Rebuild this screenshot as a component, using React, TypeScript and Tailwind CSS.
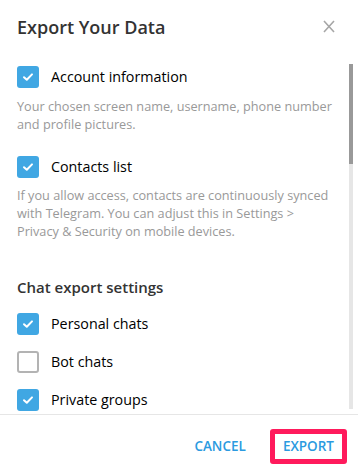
import React from "react";

type Item = { label: string; checked: boolean };

function Check({ checked }: { checked: boolean }) {
  if (!checked) {
    return <div className="w-[22px] h-[22px] shrink-0 rounded-[3px] border-2 border-[#b3b3b3] bg-white" />;
  }
  return (
    <div className="w-[22px] h-[22px] shrink-0 rounded-[3px] bg-[#40a7e3] flex items-center justify-center">
      <svg width="12" height="10" viewBox="0 0 12 10" fill="none">
        <path d="M2 5.2 L4.8 7.8 L10 2.4" stroke="white" strokeWidth="2" strokeLinecap="round" strokeLinejoin="round" />
      </svg>
    </div>
  );
}

function Row({ label, checked }: { label: string; checked: boolean }) {
  return (
    <div className="flex items-center gap-3 h-[22px]">
      <Check checked={checked} />
      <span className="text-[14.3px] text-[#000] leading-[22px]">{label}</span>
    </div>
  );
}

const chats: Item[] = [
  { label: "Personal chats", checked: true },
  { label: "Bot chats", checked: false },
  { label: "Private groups", checked: true },
];

export default function App() {
  return (
    <div
      className="w-[358px] h-[474px] bg-white flex flex-col overflow-hidden"
      style={{ fontFamily: '"Open Sans", "Liberation Sans", sans-serif' }}
    >
      {/* header */}
      <div className="h-[54px] shrink-0 flex items-center justify-between pl-[17px] pr-[23px]">
        <h1 className="text-[18px] font-semibold text-[#333]">Export Your Data</h1>
        <svg width="12" height="13" viewBox="0 0 12 13" className="mt-[-2px]">
          <path d="M1 1 L11 12 M11 1 L1 12" stroke="#a6a6a6" strokeWidth="1.6" />
        </svg>
      </div>

      {/* body */}
      <div className="flex-1 flex min-h-0">
        <div className="flex-1 pl-[17px] pt-[12px] pr-[8px]">
          <Row label="Account information" checked />
          <p className="mt-[9px] text-[12.7px] leading-[18px] text-[#999]">
            Your chosen screen name, username, phone number and profile pictures.
          </p>

          <div className="mt-[23px]">
            <Row label="Contacts list" checked />
          </div>
          <p className="mt-[8px] text-[12.7px] leading-[18px] text-[#999]">
            If you allow access, contacts are continuously synced
            <br />
            with Telegram. You can adjust this in Settings &gt;
            <br />
            Privacy &amp; Security on mobile devices.
          </p>

          <h2 className="mt-[36px] text-[15px] leading-[22px] font-semibold text-[#333]">Chat export settings</h2>

          <div className="mt-[15px] flex flex-col gap-4">
            {chats.map((c) => (
              <Row key={c.label} label={c.label} checked={c.checked} />
            ))}
          </div>
        </div>
        {/* scrollbar */}
        <div className="w-[4px] mr-[5px] mt-[10px] mb-[5px] bg-[#e6e6e6] flex flex-col">
          <div className="h-[100px] bg-[#999]" />
        </div>
      </div>

      {/* footer */}
      <div className="h-[60px] shrink-0 border-t border-[#e6e6e6] flex items-center justify-end pr-[11px] gap-6 pt-[3px]">
        <button className="text-[13.5px] font-semibold text-[#2b9ae0]">CANCEL</button>
        <button className="h-[35px] px-[8px] border-[5px] border-[#ff1a5c] rounded-[3px] text-[13.5px] font-semibold text-[#2b9ae0]">
          EXPORT
        </button>
      </div>
    </div>
  );
}
